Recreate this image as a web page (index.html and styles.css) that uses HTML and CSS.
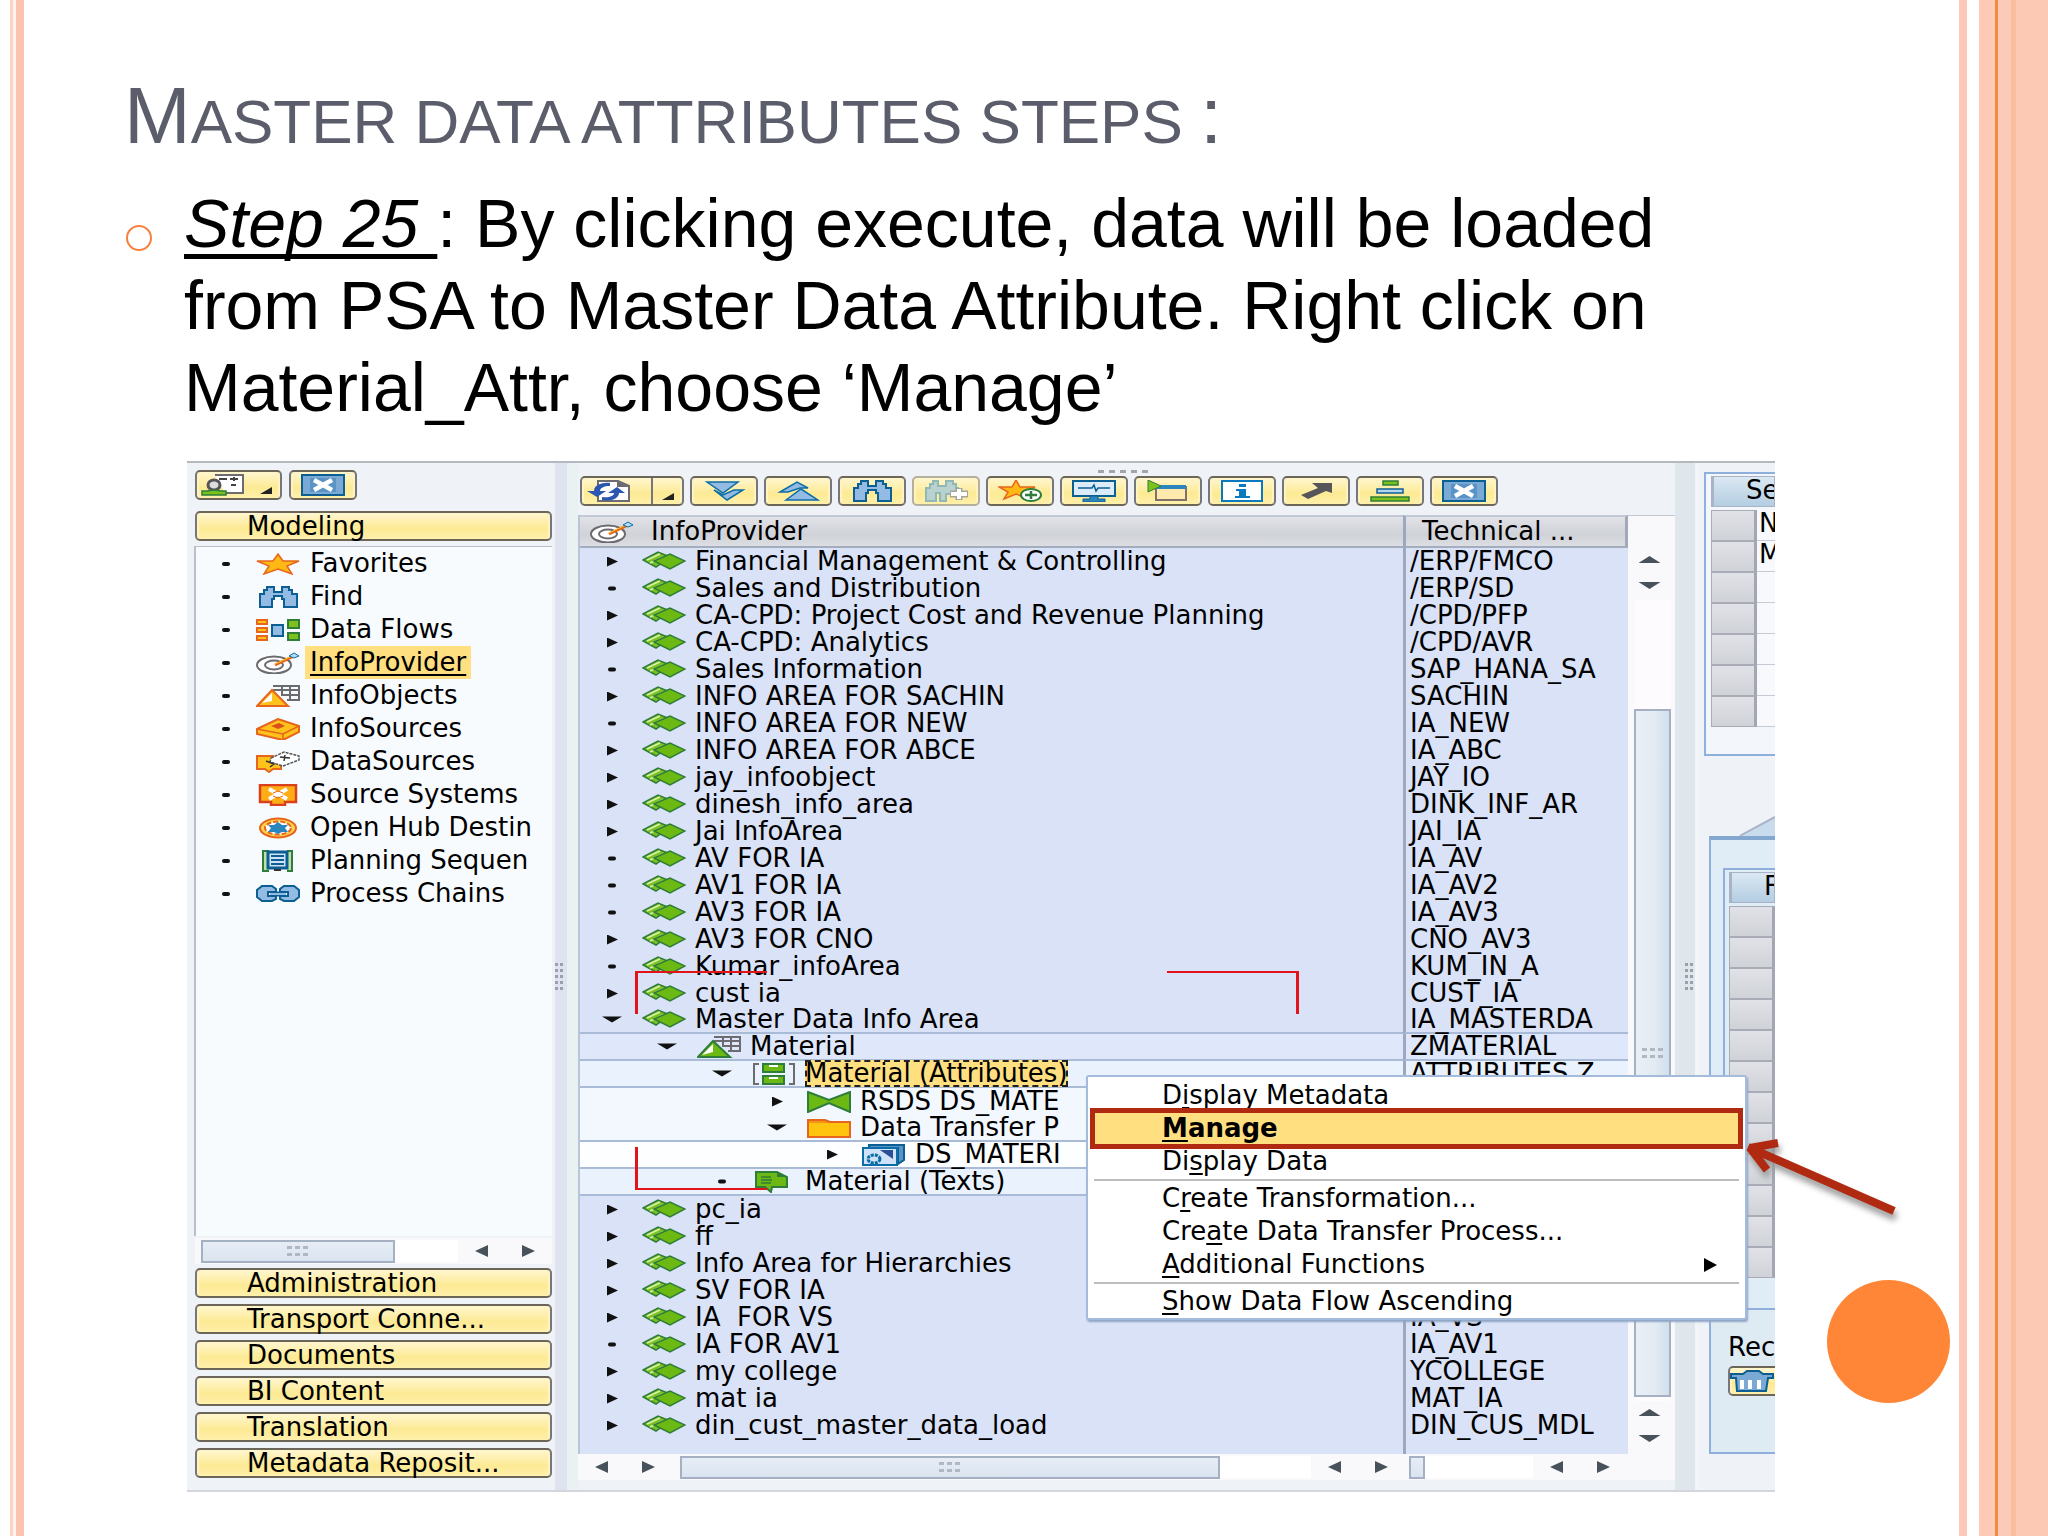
FILE: index.html
```html
<!DOCTYPE html>
<html lang="en">
<head>
    <meta charset="UTF-8">
    <meta name="viewport" content="width=device-width, initial-scale=1.0">
    <title>Master data attributes steps</title>
    <link rel="stylesheet" href="styles.css">
</head>
<body>
    <!-- shared icons -->
    <svg class="sprite" aria-hidden="true">
        <symbol id="i-star" viewBox="0 0 44 22" preserveAspectRatio="none"><path d="M22 1l5 7h16l-12 5 5 8-14-5-14 5 5-8L1 8h16z" fill="#ffb814" stroke="#e5661c" stroke-width="1.5"/></symbol>
        <symbol id="i-find" viewBox="0 0 44 22" preserveAspectRatio="none"><path d="M4 21V8h4V4h3V1h7v5h8V1h7v3h3v4h5v13H28v-8h-2v-3h-8v3h-2v8z" fill="#94bbe3" stroke="#0c5f92" stroke-width="2"/></symbol>
        <symbol id="i-flows" viewBox="0 0 44 22" preserveAspectRatio="none"><g fill="#ffc21a" stroke="#e5661c" stroke-width="2"><path d="M1 1h10v4H1zM1 9h10v4H1zM1 17h10v4H1z"/></g><path d="M16 6h11v11H16z" fill="#94bbe3" stroke="#0c5f92" stroke-width="2"/><path d="M32 1h11v8H32zM32 14h11v7H32z" fill="#7bc21d" stroke="#2f7d3a" stroke-width="2"/></symbol>
        <symbol id="i-target" viewBox="0 0 44 22" preserveAspectRatio="none"><ellipse cx="18" cy="13" rx="17" ry="8.500" fill="#fff" stroke="#6b6b70" stroke-width="2"/><ellipse cx="18" cy="13" rx="9" ry="4.500" fill="none" stroke="#6b6b70" stroke-width="2"/><path d="M19 13L38 4" stroke="#e5661c" stroke-width="3"/><path d="M19 12L36 4" stroke="#ffc21a" stroke-width="1"/><path d="M33 4l5-3 5 3-5 2z" fill="#b8dcf5" stroke="#0c6ea8"/></symbol>
        <symbol id="i-object" viewBox="0 0 44 22" preserveAspectRatio="none"><path d="M17 1h26v14H31M17 5h26M25 10h18M26 1v8M34 1v14" fill="none" stroke="#6b6b70" stroke-width="2"/><path d="M1 21L16 5l16 16z" fill="#ffc21a" stroke="#e5661c" stroke-width="2"/><path d="M6 18l10-10v8z" fill="#fff"/></symbol>
        <symbol id="i-infosource" viewBox="0 0 44 22" preserveAspectRatio="none"><path d="M1 11L22 1l21 7v6L27 22 1 16z" fill="#ffc21a" stroke="#e5661c" stroke-width="2"/><path d="M1 11l26 5 16-8M27 16v6" fill="none" stroke="#e5661c" stroke-width="1.500"/><path d="M15 8l8-3 6 3-7 3z" fill="#d9501c"/></symbol>
        <symbol id="i-datasource" viewBox="0 0 44 22" preserveAspectRatio="none"><path d="M1 5h16l8 5v8h-8l-4 3-4-3H1z" fill="#ffc21a" stroke="#e5661c" stroke-width="2"/><path d="M15 7L28 1l15 4v4l-16 6-13-4z" fill="#fff" stroke="#55555a" stroke-width="1.500" stroke-dasharray="3 1"/><path d="M24 6l10 1M29 4l-1 6M10 10l8 3-4 3" stroke="#333" stroke-width="1.500" fill="none"/></symbol>
        <symbol id="i-system" viewBox="0 0 44 22" preserveAspectRatio="none"><path d="M4 1h36v17H29v3H15v-3H4z" fill="#ffad14" stroke="#d9401c" stroke-width="2.500"/><path d="M13 5l18 10M31 5L13 15" stroke="#fff" stroke-width="4"/><path d="M17 9l5-2 5 2M17 12l5 2 5-2" stroke="#e5661c" fill="none"/></symbol>
        <symbol id="i-hub" viewBox="0 0 44 22" preserveAspectRatio="none"><ellipse cx="22" cy="11" rx="18" ry="9.500" fill="#ffd34d" stroke="#e5661c" stroke-width="2"/><ellipse cx="22" cy="11" rx="13" ry="6.500" fill="#fff" stroke="#e5661c" stroke-width="2" stroke-dasharray="5 2"/><path d="M22 5l4 3h6l-3 3 3 4h-6l-4 2-4-2h-6l3-4-3-3h6z" fill="#2c86be"/></symbol>
        <symbol id="i-plan" viewBox="0 0 44 22" preserveAspectRatio="none"><path d="M13 1H7v20h6M31 1h5v20h-5" fill="#bfe0a8" stroke="#2f7d3a" stroke-width="2"/><path d="M12 2h19v16H12z" fill="#cfe2f7" stroke="#0c5f92" stroke-width="3"/><path d="M15 6h13M15 10h13M15 14h13" stroke="#0c5f92" stroke-width="2"/><path d="M18 20h7" stroke="#333" stroke-width="2"/></symbol>
        <symbol id="i-chain" viewBox="0 0 44 22" preserveAspectRatio="none"><path d="M6 3h10l4 3v3h-8v4h8v3l-4 2H6l-5-4V7zM38 3H28l-4 3v3h8v4h-8v3l4 2h10l5-4V7z" fill="#94bbe3" stroke="#0c5f92" stroke-width="2"/><path d="M14 11h16" stroke="#0c5f92" stroke-width="5"/><path d="M14 11h16" stroke="#94bbe3" stroke-width="2"/></symbol>
        <symbol id="i-close" viewBox="0 0 44 22" preserveAspectRatio="none"><path d="M1 1h42v20H1z" fill="#79a9d4" stroke="#0c5f92" stroke-width="2"/><path d="M9 4h26v14H9z" fill="#5a93c6"/><path d="M13 6l18 10M31 6L13 16" stroke="#fff" stroke-width="4.500"/></symbol>
        <symbol id="i-layout" viewBox="0 0 44 22" preserveAspectRatio="none"><path d="M14 1h28v18H24" fill="#fff" stroke="#6b6b70" stroke-width="2"/><path d="M18 5h8M29 5h8M33 3v4M30 11h5" stroke="#444" stroke-width="2"/><ellipse cx="13" cy="11" rx="6" ry="5" fill="#ddd" stroke="#55555a" stroke-width="3"/><path d="M1 21v-4h5l7-1 7 1h5v4z" fill="#7bc21d" stroke="#2f7d3a" stroke-width="1.500"/></symbol>
        <symbol id="i-refresh" viewBox="0 0 44 22" preserveAspectRatio="none"><path d="M12 1h20l11 5v15H12z" fill="#fff" stroke="#6b6b70" stroke-width="2"/><path d="M31 1v6h12z" fill="#6b6b70"/><path d="M24 3C14 2 8 6 8 11H1l10 6 9-6h-6c0-3 4-5 10-5zM16 20c12 2 17-3 17-7h6l-8-6-9 6h6c0 3-5 5-12 4z" fill="#2c57b0"/></symbol>
        <symbol id="i-down" viewBox="0 0 44 22" preserveAspectRatio="none"><path d="M5 2h31L21 13z" fill="#94bbe3" stroke="#0c6ea8" stroke-width="1.500"/><path d="M12 10l9 5 11-5h9L25 20z" fill="#94bbe3" stroke="#0c6ea8" stroke-width="1.500"/></symbol>
        <symbol id="i-up" viewBox="0 0 44 22" preserveAspectRatio="none"><path d="M4 12L21 2l11 6h-8L12 12z" fill="#94bbe3" stroke="#0c6ea8" stroke-width="1.500"/><path d="M10 20L25 9l17 11z" fill="#94bbe3" stroke="#0c6ea8" stroke-width="1.500"/></symbol>
        <symbol id="i-findmore" viewBox="0 0 44 22" preserveAspectRatio="none"><path d="M2 21V8h4V4h3V1h5v5h8V1h7v3h3v4h2v6H22v7h-6v-8h-4v8z" fill="#b9d2cf" stroke="#8fb8b6" stroke-width="2"/><path d="M35 8v12M26 14h18" stroke="#a5a5a0" stroke-width="7"/><path d="M35 9v10M27 14h16" stroke="#fff" stroke-width="4"/></symbol>
        <symbol id="i-staradd" viewBox="0 0 44 22" preserveAspectRatio="none"><path d="M18 0l4 7h15l-11 5 4 7-12-5-12 5 4-7L1 7h13z" fill="#ffb814" stroke="#e5661c" stroke-width="1.500"/><ellipse cx="33" cy="15" rx="10" ry="6" fill="#fff" stroke="#2f7d3a" stroke-width="2"/><path d="M33 11v8M27 15h12" stroke="#2f7d3a" stroke-width="2.500"/></symbol>
        <symbol id="i-monitor" viewBox="0 0 44 22" preserveAspectRatio="none"><path d="M1 1h42v15H1z" fill="#dcebfa" stroke="#0c5f92" stroke-width="2"/><path d="M6 8h14l2-3 2 6 2-3h12" stroke="#0c5f92" stroke-width="1.500" fill="none"/><path d="M18 16h8v3h7v3H11v-3h7z" fill="#2c86be" stroke="#0c5f92"/></symbol>
        <symbol id="i-open" viewBox="0 0 44 22" preserveAspectRatio="none"><path d="M10 7h30v13H10z" fill="#ffe9ac" stroke="#80716a" stroke-width="2"/><path d="M11 7h29" stroke="#2c86be" stroke-width="4"/><path d="M2 0l13 6-13 6z" fill="#7bc21d" stroke="#2f7d3a"/></symbol>
        <symbol id="i-info" viewBox="0 0 44 22" preserveAspectRatio="none"><path d="M2 1h40v20H2z" fill="#fff" stroke="#0c78bd" stroke-width="2"/><path d="M19 4h7v3h-7zM16 9h10v7h4v2H15v-2h4v-5h-3z" fill="#0c78bd"/></symbol>
        <symbol id="i-arrow" viewBox="0 0 44 22" preserveAspectRatio="none"><path d="M18 3h20v10l-6-2-18 8-7-4 17-7z" fill="#55555a"/></symbol>
        <symbol id="i-pyramid" viewBox="0 0 44 22" preserveAspectRatio="none"><path d="M15 1h15v4H15zM3 17h38v4H3z" fill="#7bc21d" stroke="#2f7d3a" stroke-width="1.500"/><path d="M9 9h26v4H9z" fill="#b4d4f2" stroke="#0c5f92" stroke-width="1.500"/></symbol>
        <symbol id="i-area" viewBox="0 0 44 22" preserveAspectRatio="none"><path d="M1 9L16 1l12 5-14 10z" fill="#7bc21d" stroke="#2f7d3a" stroke-width="1.500"/><path d="M5 9l13-6M8 12l13-6" stroke="#d8f0b0" stroke-width="1.500"/><path d="M12 10L28 3l15 7-15 8z" fill="#6db913" stroke="#2f7d3a" stroke-width="1.500"/></symbol>
        <symbol id="i-material" viewBox="0 0 44 22" preserveAspectRatio="none"><path d="M17 1h26v14H31M17 5h26M25 10h18M26 1v8M34 1v14" fill="none" stroke="#6b6b70" stroke-width="2"/><path d="M1 21L16 5l17 16z" fill="#6db913" stroke="#2f7d3a" stroke-width="2"/><path d="M5 19l11-11v8z" fill="#fff"/></symbol>
        <symbol id="i-attr" viewBox="0 0 44 22" preserveAspectRatio="none"><path d="M7 1H2v20h5M37 1h5v20h-5" fill="none" stroke="#6b6b70" stroke-width="2"/><path d="M11 1h21v8H11zM11 13h21v8H11z" fill="#6db913" stroke="#2f7d3a" stroke-width="2"/><path d="M17 2h9v2h-9zM17 14h9v2h-9z" fill="#fff"/></symbol>
        <symbol id="i-trans" viewBox="0 0 44 22" preserveAspectRatio="none"><path d="M1 1l21 8 21-8v20l-21-9L1 21z" fill="#6db913" stroke="#2f7d3a" stroke-width="2"/></symbol>
        <symbol id="i-folder" viewBox="0 0 44 22" preserveAspectRatio="none"><path d="M1 20V3h17l5 2h20v15z" fill="#ffc40d" stroke="#e5661c" stroke-width="2"/><path d="M2 5h40" stroke="#e5661c"/></symbol>
        <symbol id="i-dtp" viewBox="0 0 44 22" preserveAspectRatio="none"><path d="M7 1h35v15l-6 4V4H7z" fill="#5a93c6" stroke="#0c5f92" stroke-width="2"/><path d="M1 4h34v17H1z" fill="#cfe2f7" stroke="#0c6ea8" stroke-width="2"/><path d="M18 6h13v9z" fill="#2b4f97"/><ellipse cx="12" cy="15" rx="6" ry="4" fill="none" stroke="#0c6ea8" stroke-width="3" stroke-dasharray="3 1"/></symbol>
        <symbol id="i-text" viewBox="0 0 44 22" preserveAspectRatio="none"><path d="M4 1h21l10 5v10H20l-1 5-6-5H4z" fill="#6db913" stroke="#2f7d3a" stroke-width="2"/><path d="M9 6h10M9 9h11M9 12h10" stroke="#2f7d3a" stroke-width="1.500"/><path d="M25 1v5h10z" fill="#2f7d3a"/></symbol>
        <symbol id="i-trash" viewBox="0 0 44 22" preserveAspectRatio="none"><path d="M1 4h12l4-3h12l4 3h10v4h-5l-2 13H7L6 8H1z" fill="#79a9d4" stroke="#0c5f92" stroke-width="2"/><path d="M12 10v9M20 10v9M29 10v9" stroke="#fff" stroke-width="4"/></symbol>
    </svg>

    <div class="slide">
        <div class="rail-left"></div>
        <main>
            <h1><span class="cap">M</span>ASTER DATA ATTRIBUTES STEPS <span class="cap">:</span></h1>
            <ul class="steps">
                <li><p><em>Step 25 </em>: By clicking execute, data will be loaded from PSA to Master Data Attribute. Right click on Material_Attr, choose ‘Manage’</p></li>
            </ul>

            <div class="shot">
                <div class="workbench">
                    <nav class="side">
                        <div class="side-tools">
                            <button class="tool drop" aria-label="Layout"><svg class="icon"><use href="#i-layout"/></svg><i class="corner"></i></button>
                            <button class="tool" aria-label="Close"><svg class="icon"><use href="#i-close"/></svg></button>
                        </div>
                        <button class="group">Modeling</button>
                        <ul class="tree">
                            <li><svg class="icon"><use href="#i-star"/></svg><a href="#">Favorites</a></li>
                            <li><svg class="icon"><use href="#i-find"/></svg><a href="#">Find</a></li>
                            <li><svg class="icon"><use href="#i-flows"/></svg><a href="#">Data Flows</a></li>
                            <li><svg class="icon"><use href="#i-target"/></svg><a href="#" class="current">InfoProvider</a></li>
                            <li><svg class="icon"><use href="#i-object"/></svg><a href="#">InfoObjects</a></li>
                            <li><svg class="icon"><use href="#i-infosource"/></svg><a href="#">InfoSources</a></li>
                            <li><svg class="icon"><use href="#i-datasource"/></svg><a href="#">DataSources</a></li>
                            <li><svg class="icon"><use href="#i-system"/></svg><a href="#">Source Systems</a></li>
                            <li><svg class="icon"><use href="#i-hub"/></svg><a href="#">Open Hub Destin</a></li>
                            <li><svg class="icon"><use href="#i-plan"/></svg><a href="#">Planning Sequen</a></li>
                            <li><svg class="icon"><use href="#i-chain"/></svg><a href="#">Process Chains</a></li>
                        </ul>
                        <div class="hscroll">
                            <div class="thumb"><i class="grip"></i></div>
                            <div class="track"></div>
                            <i class="tri left"></i><i class="tri right"></i>
                        </div>
                        <div class="groups">
                            <button class="group">Administration</button>
                            <button class="group">Transport Conne...</button>
                            <button class="group">Documents</button>
                            <button class="group">BI Content</button>
                            <button class="group">Translation</button>
                            <button class="group">Metadata Reposit...</button>
                        </div>
                    </nav>
                    <div class="splitter"><i class="dots"></i></div>

                    <section class="center">
                        <i class="handle"></i>
                        <div class="tools">
                            <button class="tool split" aria-label="Refresh"><svg class="icon"><use href="#i-refresh"/></svg><i class="corner"></i></button>
                            <button class="tool" aria-label="Expand"><svg class="icon"><use href="#i-down"/></svg></button>
                            <button class="tool" aria-label="Collapse"><svg class="icon"><use href="#i-up"/></svg></button>
                            <button class="tool" aria-label="Find"><svg class="icon"><use href="#i-find"/></svg></button>
                            <button class="tool" aria-label="Find next" disabled><svg class="icon"><use href="#i-findmore"/></svg></button>
                            <button class="tool" aria-label="Add favorite"><svg class="icon"><use href="#i-staradd"/></svg></button>
                            <button class="tool" aria-label="Monitor"><svg class="icon"><use href="#i-monitor"/></svg></button>
                            <button class="tool" aria-label="Open"><svg class="icon"><use href="#i-open"/></svg></button>
                            <button class="tool" aria-label="Information"><svg class="icon"><use href="#i-info"/></svg></button>
                            <button class="tool" aria-label="Go to"><svg class="icon"><use href="#i-arrow"/></svg></button>
                            <button class="tool" aria-label="Hierarchy"><svg class="icon"><use href="#i-pyramid"/></svg></button>
                            <button class="tool" aria-label="Close"><svg class="icon"><use href="#i-close"/></svg></button>
                        </div>
                        <div class="grid">
                            <table class="providers">
                                <colgroup><col><col class="col-tech"></colgroup>
                                <thead>
                                    <tr><th><div class="node"><svg class="icon"><use href="#i-target"/></svg>InfoProvider</div></th><th class="tech">Technical ...</th></tr>
                                </thead>
                                <tbody id="rows"></tbody>
                                <tfoot>
                                    <tr><td></td><td></td></tr>
                                </tfoot>
                            </table>
                            <div class="vscroll">
                                <i class="tri up"></i><i class="tri down"></i>
                                <div class="vtrack"><div class="vthumb"><i class="grip"></i></div></div>
                                <i class="tri up"></i><i class="tri down"></i>
                            </div>
                        </div>
                        <div class="hscroll wide">
                            <i class="tri left"></i><i class="tri right"></i>
                            <div class="thumb"><i class="grip"></i></div>
                            <div class="track"></div>
                            <i class="tri left"></i><i class="tri right"></i>
                            <div class="second">
                                <div class="thumb small"></div>
                                <div class="track"></div>
                                <i class="tri left"></i><i class="tri right"></i>
                            </div>
                        </div>
                    </section>
                    <div class="splitter pale"><i class="dots"></i></div>

                    <section class="pane">
                        <div class="card first">
                            <div class="tab">Se</div>
                            <div class="cells" id="cellsTop"></div>
                        </div>
                        <svg class="peak" viewBox="0 0 65 20" preserveAspectRatio="none"><path d="M33 20L65 2v18z" fill="#c8dced"/><path d="M30 20L65 1" stroke="#a9b4cb" stroke-width="2"/></svg>
                        <div class="card second-card">
                            <div class="inner">
                                <div class="tab">F</div>
                                <div class="cells" id="cellsBottom"></div>
                            </div>
                        </div>
                        <div class="card third">
                            <div>Rec</div>
                            <button class="tool" aria-label="Delete"><svg class="icon"><use href="#i-trash"/></svg></button>
                        </div>
                    </section>
                </div>

                <!-- corner marks and context menu over the tree -->
                <i class="mark mark-tl"></i>
                <i class="mark mark-tr"></i>
                <i class="mark mark-bl"></i>
                <div class="menu" role="menu">
                    <button role="menuitem">D<u>i</u>splay Metadata</button>
                    <button role="menuitem" class="active"><u>M</u>anage</button>
                    <button role="menuitem">Di<u>s</u>play Data</button>
                    <hr>
                    <button role="menuitem">C<u>r</u>eate Transformation...</button>
                    <button role="menuitem">Cre<u>a</u>te Data Transfer Process...</button>
                    <button role="menuitem" class="more"><u>A</u>dditional Functions</button>
                    <hr>
                    <button role="menuitem"><u>S</u>how Data Flow Ascending</button>
                </div>
                <svg class="pointer" viewBox="0 0 170 90"><path d="M10 14L156 78M12 15l28-5M12 15l17 22" fill="none" stroke="#b02a12" stroke-width="8" stroke-linejoin="round"/></svg>
                <div class="ball"></div>
            </div>
        </main>
        <div class="rail-right"></div>
    </div>

    <script>
        // level, state (c = closed, o = open, d = leaf), icon, name, technical name
        const rows = [
            [0, 'c', 'area', 'Financial Management & Controlling', '/ERP/FMCO'],
            [0, 'd', 'area', 'Sales and Distribution', '/ERP/SD'],
            [0, 'c', 'area', 'CA-CPD: Project Cost and Revenue Planning', '/CPD/PFP'],
            [0, 'c', 'area', 'CA-CPD: Analytics', '/CPD/AVR'],
            [0, 'd', 'area', 'Sales Information', 'SAP_HANA_SA'],
            [0, 'c', 'area', 'INFO AREA FOR SACHIN', 'SACHIN'],
            [0, 'd', 'area', 'INFO AREA FOR NEW', 'IA_NEW'],
            [0, 'c', 'area', 'INFO AREA FOR ABCE', 'IA_ABC'],
            [0, 'c', 'area', 'jay_infoobject', 'JAY_IO'],
            [0, 'c', 'area', 'dinesh_info_area', 'DINK_INF_AR'],
            [0, 'c', 'area', 'Jai InfoArea', 'JAI_IA'],
            [0, 'd', 'area', 'AV FOR IA', 'IA_AV'],
            [0, 'd', 'area', 'AV1 FOR IA', 'IA_AV2'],
            [0, 'd', 'area', 'AV3 FOR IA', 'IA_AV3'],
            [0, 'c', 'area', 'AV3 FOR CNO', 'CNO_AV3'],
            [0, 'd', 'area', 'Kumar_infoArea', 'KUM_IN_A'],
            [0, 'c', 'area', 'cust ia', 'CUST_IA'],
            [0, 'o', 'area', 'Master Data Info Area', 'IA_MASTERDA', 'line'],
            [1, 'o', 'material', 'Material', 'ZMATERIAL', 'line'],
            [2, 'o', 'attr', 'Material (Attributes)', 'ATTRIBUTES Z', 'line picked'],
            [3, 'c', 'trans', 'RSDS DS_MATE', ''],
            [3, 'o', 'folder', 'Data Transfer P', '', 'line'],
            [4, 'c', 'dtp', 'DS_MATERI', '', 'line'],
            [2, 'd', 'text', 'Material (Texts)', '', 'line'],
            [0, 'c', 'area', 'pc_ia', ''],
            [0, 'c', 'area', 'ff', ''],
            [0, 'c', 'area', 'Info Area for Hierarchies', ''],
            [0, 'c', 'area', 'SV FOR IA', ''],
            [0, 'c', 'area', 'IA\u00a0 FOR VS', 'IA_VS'],
            [0, 'd', 'area', 'IA FOR AV1', 'IA_AV1'],
            [0, 'c', 'area', 'my college', 'YCOLLEGE'],
            [0, 'c', 'area', 'mat ia', 'MAT_IA'],
            [0, 'c', 'area', 'din_cust_master_data_load', 'DIN_CUS_MDL']
        ];

        document.getElementById('rows').innerHTML = rows
            .map(([level, state, icon, name, tech, extra]) => `<tr class="level-${level} ${extra || ''}">
                <td><div class="node"><i class="state ${state}"></i><svg class="icon"><use href="#i-${icon}"/></svg><span>${name.replace('&', '&amp;')}</span></div></td>
                <td><div class="node">${tech}</div></td></tr>`)
            .join('');

        const cells = (first, count) => first.concat(Array(count).fill(''))
            .map(text => `<div class="cell"></div><div class="value">${text}</div>`)
            .join('');
        document.getElementById('cellsTop').innerHTML = cells(['N', 'M'], 5);
        document.getElementById('cellsBottom').innerHTML = cells([], 12);
    </script>
</body>
</html>
```

FILE: styles.css
```css
* {
    box-sizing: border-box;
}
body {
    margin: 0;
    background-color: #fff;
    font-family: "Liberation Sans", Arial, sans-serif;
    color: #000;
}
.sprite {
    display: none;
}
.slide {
    display: grid;
    grid-template-columns: 24px 1fr 89px;
    min-height: 100vh;
    overflow: hidden;
}
.rail-left {
    background: linear-gradient(to right, #fff 10px, #fdd3c5 10px 13px, #fff3ee 13px 16px, #fdc3b1 16px);
}
.rail-right {
    background: linear-gradient(to right, #fcc8b8 8px, #fff 8px 20px, #fccab5 20px 36px, #f48a42 36px 39px, #fccab8 39px 52px, #fbbd9f 52px 57px, #fccab4 57px);
}
main {
    padding: 68px 0 0 100px;
    min-width: 0;
}
h1 {
    margin: 0 0 12px;
    font-size: 62px;
    font-weight: normal;
    line-height: 96px;
    color: #5b5d6b;
}
h1 .cap {
    font-size: 80px;
}
ul {
    margin: 0;
    padding: 0;
    list-style: none;
}
.steps li {
    display: grid;
    grid-template-columns: 60px 1fr;
    padding-right: 184px;
}
.steps li::before {
    content: "";
    width: 22px;
    height: 22px;
    margin: 43px 0 0 2px;
    border: 2px solid #f5813f;
    border-radius: 50%;
}
.steps p {
    margin: 0;
    font-size: 68px;
    line-height: 82px;
}
.steps em {
    text-decoration: underline;
    text-decoration-thickness: 5px;
    text-underline-offset: 7px;
    text-decoration-skip-ink: none;
    white-space: pre;
}

/* application window */
.shot {
    position: relative;
    margin: 33px 184px 0 63px;
    font-family: "DejaVu Sans", sans-serif;
    font-size: 26px;
    line-height: 27px;
}
.workbench {
    display: grid;
    grid-template-columns: 368px 23px 1fr 23px 77px;
    border-top: 2px solid #b4b8bf;
    border-bottom: 2px solid #d3d6dc;
    background-color: #eff2f6;
    overflow: hidden;
}
button {
    font: inherit;
    color: inherit;
    padding: 0;
    margin: 0;
}
.icon {
    width: 44px;
    height: 22px;
    flex: none;
    display: block;
}
.tool,
.group {
    height: 30px;
    border: 2px solid #6b6657;
    border-left-color: #75777c;
    border-right-color: #75777c;
    border-radius: 5px;
    background: linear-gradient(#fff6cf, #fdea94 60%, #fff0ab);
    box-shadow: inset 2px 0 #fff3c0, inset -2px 0 #fff3c0;
}
.tool {
    display: flex;
    align-items: center;
    justify-content: center;
    width: 68px;
    flex: none;
}
.tool:disabled {
    border-color: #b5b09c;
}
.tool.drop {
    width: 87px;
    justify-content: space-between;
    padding: 0 8px 0 4px;
}
.tool.split {
    width: 104px;
    justify-content: space-between;
    padding: 0 8px 0 4px;
    background: linear-gradient(to right, transparent 69px, #75777c 69px 71px, transparent 71px), linear-gradient(#fff6cf, #fdea94 60%, #fff0ab);
}
.corner {
    align-self: flex-end;
    border-left: 12px solid transparent;
    border-bottom: 7px solid #222;
    margin-bottom: 4px;
}
.group {
    display: block;
    width: 100%;
    padding-left: 50px;
    text-align: left;
    line-height: 26px;
    white-space: nowrap;
}

/* left navigation */
.side {
    display: flex;
    flex-direction: column;
    padding: 7px 3px 12px 8px;
    min-width: 0;
}
.side-tools {
    display: flex;
    gap: 7px;
    margin-bottom: 11px;
}
.tree {
    flex: 1;
    margin: 5px 0 2px -1px;
    border-top: 1px solid #b9bfcb;
    border-left: 2px solid #b9bfcb;
    background-color: #f8fbfe;
    overflow: hidden;
}
.tree li {
    display: flex;
    align-items: center;
    height: 33px;
    padding-left: 26px;
    white-space: nowrap;
}
.tree li::before {
    content: "";
    width: 8px;
    height: 4px;
    margin-right: 26px;
    border-radius: 2px;
    background-color: #111;
    flex: none;
}
.tree a {
    color: #000;
    text-decoration: none;
    margin-left: 5px;
    padding: 3px 5px;
}
.tree .current {
    background-color: #ffdf80;
    text-decoration: underline;
    text-decoration-thickness: 2px;
    text-underline-offset: 3px;
}
.hscroll {
    display: flex;
    align-items: center;
    height: 26px;
    background-color: #f9f9fc;
}
.side .hscroll {
    margin-bottom: 4px;
    padding-left: 6px;
}
.thumb {
    display: flex;
    align-items: center;
    justify-content: center;
    width: 194px;
    height: 23px;
    border: 2px solid #a5b0c2;
    background: linear-gradient(#e7edf6, #dae4f0);
}
.track {
    flex: 1;
    height: 22px;
    background-color: #fff;
}
.grip {
    width: 22px;
    height: 10px;
    background: repeating-linear-gradient(to right, #b0b8c4 0 5px, transparent 5px 8px);
    mask: linear-gradient(#000 3px, transparent 3px 7px, #000 7px);
}
.tri {
    flex: none;
    width: 47px;
    height: 12px;
    background-color: #48525a;
}
.tri.left {
    clip-path: polygon(17px 50%, 30px 0, 30px 100%);
}
.tri.right {
    clip-path: polygon(17px 0, 30px 50%, 17px 100%);
}
.groups {
    display: flex;
    flex-direction: column;
    gap: 6px;
}
.splitter {
    display: flex;
    align-items: center;
    background: linear-gradient(to right, #dfe3ef 12px, #eaf1f3 12px);
}
.splitter.pale {
    padding-left: 10px;
    background: linear-gradient(to right, #dfe7ed 20px, #f3f5f9 20px);
}
.dots {
    width: 8px;
    height: 28px;
    background: repeating-linear-gradient(#9aa0ab 0 3px, transparent 3px 6px);
    mask: linear-gradient(to right, #000 3px, transparent 3px 5px, #000 5px);
}

/* provider tree */
.center {
    padding: 7px 0 8px;
    min-width: 0;
}
.handle {
    display: block;
    width: 50px;
    height: 3px;
    margin: 0 0 3px 520px;
    background: repeating-linear-gradient(to right, #a2a5ae 0 6px, transparent 6px 11px);
}
.tools {
    display: flex;
    gap: 6px;
    padding: 0 2px;
    margin-bottom: 9px;
}
.grid {
    display: grid;
    grid-template-columns: 1fr 47px;
}
.providers {
    width: 100%;
    table-layout: fixed;
    border-collapse: separate;
    border-spacing: 0;
    background-color: #d9e2f6;
    border-left: 2px solid #b9c5d6;
}
.col-tech {
    width: 225px;
}
.providers th {
    height: 33px;
    padding: 0 0 0 10px;
    font-weight: normal;
    text-align: left;
    white-space: nowrap;
    background: linear-gradient(#e2e2e9, #cfd2d6 60%, #dcdee4);
    border-top: 2px solid #c3c9d2;
    border-bottom: 2px solid #a3adbd;
}
.providers th .icon {
    margin-right: 17px;
}
.providers .tech {
    padding-left: 16px;
    border-right: 3px solid #a3a9b8;
}
.providers td {
    height: 27px;
    padding: 0;
    white-space: nowrap;
}
.providers tfoot td {
    height: 15px;
}
.providers tr > :last-child {
    border-left: 3px solid #9ca8c0;
}
.providers td:last-child {
    padding-left: 4px;
}
.node {
    display: flex;
    align-items: center;
    height: 25px;
}
.node .icon {
    margin-right: 9px;
}
.line td {
    border-bottom: 2px solid #a9bbd6;
}
.level-1 {
    background-color: #dfe8fa;
}
.level-2 {
    background-color: #eaf2fd;
}
.level-3 {
    background-color: #f2f8fe;
}
.level-4 {
    background-color: #fdfeff;
}
.level-1 td:first-child {
    padding-left: 55px;
}
.level-2 td:first-child {
    padding-left: 110px;
}
.level-3 td:first-child {
    padding-left: 165px;
}
.level-4 td:first-child {
    padding-left: 220px;
}
.picked .node span {
    background-color: #ffdf80;
    outline: 2px dashed #222;
    outline-offset: -2px;
}
.state {
    width: 62px;
    height: 10px;
    flex: none;
    background-color: #111;
}
.state.c {
    clip-path: polygon(27px 0, 38px 50%, 27px 100%);
}
.state.o {
    clip-path: polygon(22px 20%, 42px 20%, 32px 80%);
}
.state.d {
    clip-path: inset(3px 26px 3px 28px round 2px);
}
.vscroll {
    display: flex;
    flex-direction: column;
    align-items: center;
    padding: 32px 4px 1px 6px;
    background-color: #f9f9fc;
    border-top: 1px solid #c3c9d2;
}
.tri.up,
.tri.down {
    width: 22px;
    height: 26px;
    margin-right: 6px;
}
.tri.up {
    clip-path: polygon(0 15px, 50% 8px, 100% 15px);
}
.tri.down {
    clip-path: polygon(0 8px, 50% 15px, 100% 8px);
}
.vtrack {
    flex: 1;
    width: 100%;
    padding: 109px 0 4px;
    background-color: #fdfbfe;
}
.vthumb {
    display: flex;
    align-items: center;
    justify-content: center;
    height: 100%;
    border: 2px solid #a5b0c2;
    background: linear-gradient(to right, #e9f0f6, #e2eaf3 60%, #cfdfec);
}
.hscroll.wide > .thumb {
    width: 540px;
    margin-left: 8px;
}
.second {
    display: flex;
    align-items: center;
    width: 270px;
    padding: 0 48px 0 4px;
}
.thumb.small {
    width: 16px;
}

/* cut-off pane on the right */
.pane {
    padding: 9px 0 36px 6px;
    min-width: 0;
    overflow: hidden;
    white-space: nowrap;
    background-color: #eff2f7;
}
.card {
    border: 2px solid #8fb0dc;
    border-right: 0;
    background-color: #f3f6fa;
    overflow: hidden;
}
.card.first {
    height: 284px;
    padding: 2px 0 0 5px;
}
.tab {
    height: 31px;
    padding-left: 32px;
    border: 1px solid #a8b4c6;
    border-left-width: 3px;
    background: linear-gradient(#dbe8f3, #b3cde2);
    overflow: hidden;
}
.cells {
    display: grid;
    grid-template-columns: 46px 1fr;
    grid-auto-rows: 31px;
    margin-top: 3px;
}
.cell {
    border: 1px solid #a9acb6;
    border-right: 3px solid #a3a7b3;
    background: linear-gradient(#e1e2e7, #cfd2d7);
}
.value {
    padding-left: 2px;
    border-bottom: 1px solid #c5ccd6;
    background-color: #f7f9fc;
    overflow: hidden;
}
.peak {
    display: block;
    width: 65px;
    height: 20px;
    margin: 60px 0 0 6px;
}
.second-card {
    height: 474px;
    margin-left: 5px;
    border-top: 4px solid #83a7cf;
    background-color: #e0ecf6;
    padding: 28px 0 0 12px;
}
.inner {
    border: 2px solid #8fb0dc;
    border-width: 2px 0 0 2px;
    padding: 2px 0 0 4px;
}
.third {
    height: 144px;
    margin-left: 5px;
    border-top: 0;
    background-color: #dfebf3;
    padding: 24px 0 0 17px;
}
.third .tool {
    margin-top: 5px;
    justify-content: flex-start;
}

/* overlays */
.mark {
    position: absolute;
    width: 132px;
    height: 43px;
    border: 0 solid #e3131b;
}
.mark-tl {
    left: 448px;
    top: 510px;
    border-width: 2px 0 0 3px;
}
.mark-tr {
    left: 980px;
    top: 510px;
    border-width: 2px 3px 0 0;
}
.mark-bl {
    left: 448px;
    top: 686px;
    border-width: 0 0 2px 3px;
}
.menu {
    position: absolute;
    left: 899px;
    top: 614px;
    width: 661px;
    padding: 2px 6px 0;
    border: 2px solid #a5bbdc;
    border-radius: 3px;
    background-color: #fff;
    box-shadow: 1px 2px 2px #8fa5c4;
}
.menu button {
    display: block;
    width: 100%;
    height: 33px;
    padding-left: 68px;
    border: 0;
    background-color: transparent;
    text-align: left;
    line-height: 33px;
}
.menu u {
    text-decoration-thickness: 2px;
    text-underline-offset: 3px;
    text-decoration-skip-ink: none;
}
.menu .active {
    background-color: #ffdf80;
    outline: 5px solid #b02a12;
    outline-offset: -1px;
    font-weight: bold;
}
.menu .more {
    position: relative;
}
.more::after {
    content: "";
    position: absolute;
    right: 22px;
    top: 10px;
    border: 7px solid transparent;
    border-left: 13px solid #000;
    border-right: 0;
}
.menu hr {
    height: 2px;
    margin: 1px 0;
    border: 0;
    background-color: #bdbdbd;
}
.pointer {
    position: absolute;
    left: 1551px;
    top: 672px;
    width: 170px;
    height: 90px;
    filter: drop-shadow(2px 6px 3px #999);
}
.ball {
    position: absolute;
    left: 1640px;
    top: 819px;
    width: 123px;
    height: 123px;
    border-radius: 50%;
    background-color: #ff8637;
}
```
